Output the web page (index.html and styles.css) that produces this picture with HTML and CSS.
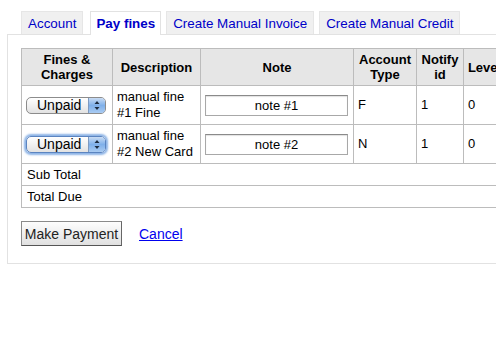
FILE: index.html
```html
<!DOCTYPE html>
<html lang="en">
<head>
    <meta charset="UTF-8">
    <title>Pay fines</title>
    <link rel="stylesheet" href="styles.css">
</head>
<body>
    <div class="tabs-wrap">
        <ul class="tabs">
            <li class="tab"><a href="#">Account</a></li>
            <li class="tab active"><a href="#">Pay fines</a></li>
            <li class="tab"><a href="#">Create Manual Invoice</a></li>
            <li class="tab"><a href="#">Create Manual Credit</a></li>
        </ul>

        <div class="panel">
            <table class="fines">
                <colgroup>
                    <col class="c-fine">
                    <col class="c-desc">
                    <col class="c-note">
                    <col class="c-type">
                    <col class="c-notify">
                    <col class="c-level">
                </colgroup>
                <thead>
                    <tr>
                        <th>Fines &amp; Charges</th>
                        <th>Description</th>
                        <th>Note</th>
                        <th>Account Type</th>
                        <th>Notify id</th>
                        <th>Level</th>
                    </tr>
                </thead>
                <tbody>
                    <tr>
                        <td>
                            <span class="select-wrap">
                                <select class="pay-select">
                                    <option>Unpaid</option>
                                    <option>Pay</option>
                                    <option>Writeoff</option>
                                </select>
                                <svg class="arrows" width="16" height="15" viewBox="0 0 16 15">
                                    <path d="M5.5 6 L8 3 L10.5 6 Z M5.5 9 L8 12 L10.5 9 Z" fill="#1d2c40"/>
                                </svg>
                            </span>
                        </td>
                        <td>manual fine #1 Fine</td>
                        <td class="note-cell"><input class="note" type="text" value="note #1"></td>
                        <td>F</td>
                        <td>1</td>
                        <td>0</td>
                    </tr>
                    <tr>
                        <td>
                            <span class="select-wrap focused">
                                <select class="pay-select">
                                    <option>Unpaid</option>
                                    <option>Pay</option>
                                    <option>Writeoff</option>
                                </select>
                                <svg class="arrows" width="16" height="15" viewBox="0 0 16 15">
                                    <path d="M5.5 6 L8 3 L10.5 6 Z M5.5 9 L8 12 L10.5 9 Z" fill="#1d2c40"/>
                                </svg>
                            </span>
                        </td>
                        <td>manual fine #2 New Card</td>
                        <td class="note-cell"><input class="note" type="text" value="note #2"></td>
                        <td>N</td>
                        <td>1</td>
                        <td>0</td>
                    </tr>
                    <tr class="total-row">
                        <td colspan="6">Sub Total</td>
                    </tr>
                    <tr class="total-row">
                        <td colspan="6">Total Due</td>
                    </tr>
                </tbody>
            </table>

            <div class="actions">
                <button class="btn" type="button">Make Payment</button>
                <a class="cancel" href="#">Cancel</a>
            </div>
        </div>
    </div>
</body>
</html>
```

FILE: styles.css
```css
html, body {
    margin: 0;
    padding: 0;
    background: #fff;
    overflow: hidden;
}

body {
    font-family: "Liberation Sans", Arial, Helvetica, sans-serif;
    font-size: 13px;
    color: #000;
}

.tabs-wrap {
    margin: 11px 0 0 7px;
    width: 600px;
}

.tabs {
    list-style: none;
    margin: 0;
    padding: 0 0 0 14px;
    display: flex;
    align-items: flex-end;
    position: relative;
    z-index: 1;
}

.tab {
    height: 22px;
    margin-right: 5px;
    background: #f0f0f0;
    border: 1px solid #e6e6e6;
    border-bottom: none;
    display: flex;
    align-items: center;
}

.tab a {
    padding: 0 6px;
    color: #0000c8;
    text-decoration: none;
    font-size: 13.4px;
}

.tab.active {
    height: 23px;
    margin-bottom: -1px;
    margin-left: 2px;
    background: #fff;
    border-color: #e2e2e2;
}

.tab.active a {
    font-weight: bold;
    padding: 0 5px;
}

.panel {
    border: 1px solid #e2e2e2;
    padding: 13px 0 17px 13px;
}

.fines {
    border-collapse: collapse;
    table-layout: fixed;
    width: 484px;
    border: 1px solid #bcbcbc;
}

.c-fine { width: 91px; }
.c-desc { width: 88px; }
.c-note { width: 153px; }
.c-type { width: 63px; }
.c-notify { width: 47px; }
.c-level { width: 42px; }

.fines th,
.fines td {
    border: 1px solid #bcbcbc;
    padding: 3px 4px;
    line-height: 15px;
    vertical-align: middle;
}

.fines th {
    background: #e6e6e6;
    font-weight: bold;
    text-align: center;
    padding: 3px 3px;
}

.fines th:last-child {
    white-space: nowrap;
}

.fines tbody tr:not(.total-row) td {
    height: 30px;
    line-height: 16px;
}

.fines .total-row td {
    border-left: none;
    border-right: none;
    padding-left: 5px;
}

.select-wrap {
    position: relative;
    display: inline-block;
    width: 80px;
    height: 17px;
    border: 1px solid #8c8c8c;
    border-radius: 5px;
    background: linear-gradient(#ffffff, #f1f1f1 50%, #e2e2e2);
    box-sizing: border-box;
    vertical-align: middle;
}

.select-wrap.focused {
    box-shadow: 0 0 2px 2px #8db4e6;
    border-color: #5b84c0;
}

.pay-select {
    appearance: none;
    -webkit-appearance: none;
    border: none;
    background: transparent;
    font-family: inherit;
    font-size: 14px;
    width: 100%;
    height: 15px;
    line-height: 15px;
    padding: 0 0 0 10px;
    margin: 0;
    color: #000;
    outline: none;
}

.arrows {
    position: absolute;
    right: 0;
    top: 0;
    border-left: 1px solid #7e9ac0;
    border-radius: 0 4px 4px 0;
    background: linear-gradient(#c9dcf4, #7fb0ea 50%, #a9cbf2);
}

.note {
    width: 143px;
    height: 21px;
    box-sizing: border-box;
    border: 1px solid #a8a8a8;
    border-top-color: #8a8a8a;
    box-shadow: inset 0 1px 1px rgba(0, 0, 0, 0.12);
    font-family: inherit;
    font-size: 13px;
    text-align: center;
    padding: 0;
    margin: 0;
    display: block;
}

.actions {
    margin-top: 13px;
    display: flex;
    align-items: center;
}

.btn {
    height: 25px;
    width: 101px;
    padding: 0;
    font-family: inherit;
    font-size: 14px;
    color: #222;
    background: linear-gradient(#fdfdfd, #ececec 60%, #e0e0e0);
    border: 1px solid #8a8a8a;
    border-bottom-color: #555;
    border-right-color: #666;
    cursor: pointer;
}

.cancel {
    margin-left: 17px;
    color: #0000ee;
    font-size: 14px;
    text-decoration: underline;
}
```
